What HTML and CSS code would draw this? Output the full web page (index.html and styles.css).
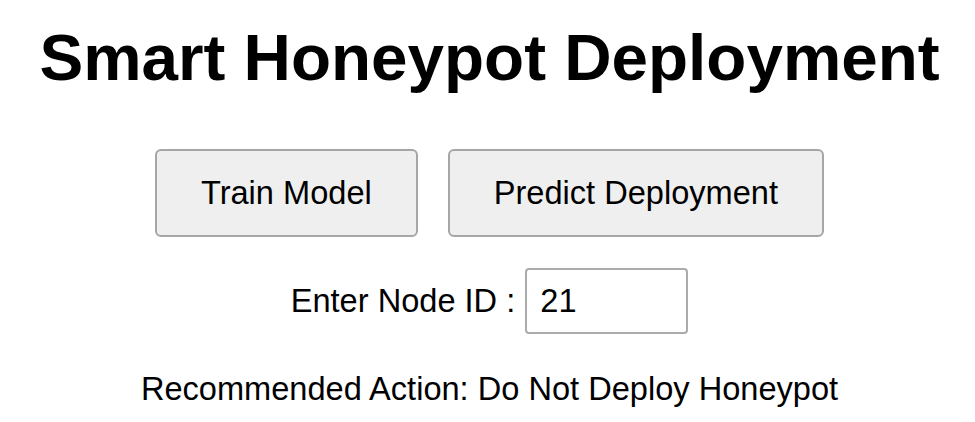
FILE: index.html
```html
<!DOCTYPE html>
<html lang="en">

<head>
    <meta charset="UTF-8">
    <meta name="viewport" content="width=device-width, initial-scale=1.0">
    <title>Smart Honeypot Deployment</title>
    <link rel="stylesheet" href="styles.css">
</head>

<body>
    <h1 class="title">Smart Honeypot Deployment</h1>

    <div class="actions">
        <button class="btn">Train Model</button>
        <button class="btn">Predict Deployment</button>
    </div>

    <div class="node-row">
        <label for="node-id">Enter Node ID :</label>
        <input id="node-id" class="node-input" type="text" value="21">
    </div>

    <p class="result">Recommended Action: Do Not Deploy Honeypot</p>
</body>

</html>
```

FILE: styles.css
```css
body,
html {
    margin: 0;
    padding: 0;
    background: #fff;
    color: #000;
}

body {
    padding: 20px 0 0 4px;
    font-family: "Liberation Sans", Arial, sans-serif;
    font-size: 32.6px;
    text-align: center;
}

.title {
    margin: 0;
    font-size: 65.6px;
    font-weight: bold;
    line-height: normal;
}

.actions {
    display: flex;
    justify-content: center;
    gap: 30px;
    margin-top: 54px;
}

.btn {
    padding: 23px 44px;
    font-family: inherit;
    font-size: 32.6px;
    line-height: normal;
    color: #000;
    background-color: #efefef;
    border: 2px solid #a6a6a6;
    border-radius: 6px;
    cursor: pointer;
}

.node-row {
    display: flex;
    justify-content: center;
    align-items: center;
    gap: 10px;
    margin-top: 31px;
}

.node-input {
    box-sizing: border-box;
    width: 163px;
    height: 66px;
    padding: 12px 13px;
    font-family: inherit;
    font-size: 32.6px;
    color: #000;
    border: 2px solid #ababab;
    border-radius: 4px;
    outline: none;
}

.result {
    margin: 36px 0 0;
    line-height: normal;
}
```
